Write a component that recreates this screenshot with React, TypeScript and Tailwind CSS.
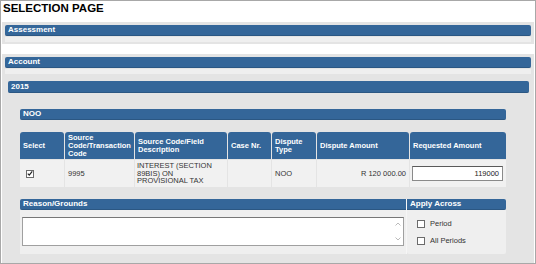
import React from 'react';

const font = { fontFamily: '"Liberation Sans", Arial, sans-serif' };

function Bar({ label, className = '' }: { label: string; className?: string }) {
  return (
    <div
      className={`h-[11px] flex items-center pl-[3px] rounded-[2px] bg-[#346699] border-b border-[#2b5783] text-white font-bold text-[8px] leading-none ${className}`}
    >
      {label}
    </div>
  );
}

const headers = [
  ['Select'],
  ['Source', 'Code/Transaction', 'Code'],
  ['Source Code/Field', 'Description'],
  ['Case Nr.'],
  ['Dispute', 'Type'],
  ['Dispute Amount'],
  ['Requested Amount'],
];

function Check({ checked }: { checked?: boolean }) {
  return (
    <span className="w-[8px] h-[8px] border border-[#6b6b6b] bg-white flex items-center justify-center shrink-0">
      {checked && (
        <svg width="7" height="7" viewBox="0 0 8 8">
          <path d="M1 4.2l2 2 4-5" fill="none" stroke="#222" strokeWidth="1.6" />
        </svg>
      )}
    </span>
  );
}

export default function App() {
  return (
    <div style={font} className="w-[536px] h-[264px] bg-white border border-[#a8a8a8] overflow-hidden flex flex-col">
      {/* Title */}
      <div className="h-[21px] pl-[2px] pt-[1px] text-[11.5px] font-bold text-black leading-[12px]">
        SELECTION PAGE
      </div>

      {/* Assessment */}
      <div className="mx-[1px] bg-[#e4e4e4] px-[3px] pt-[3px] pb-[2px]">
        <Bar label="Assessment" />
        <div className="h-[5px] mt-[1px] bg-[#efefef]" />
      </div>

      <div className="h-[10px]" />

      {/* Account */}
      <div className="mx-[1px] flex-1 bg-[#e4e4e4] px-[3px] pt-[3px]">
        <Bar label="Account" />
        <div className="h-[5px] mt-[1px] bg-[#efefef]" />

        {/* 2015 */}
        <div className="mt-[1px] pl-[3px] pr-[2px] pt-[6px]">
          <Bar label="2015" className="h-[12px] pl-[3px]" />

          <div className="pl-[12px] pr-[23px] pt-[16px]">
            <Bar label="NOO" className="pl-[2px]" />

            {/* Table */}
            <div className="mt-[12px] grid grid-cols-[44px_69px_92px_43px_44px_92px_96px] gap-x-[1px] gap-y-[1px] text-[7.5px] leading-[8px]">
              {headers.map((lines, i) => (
                <div
                  key={i}
                  className="h-[27px] bg-[#346699] rounded-t-[3px] text-white font-bold flex flex-col justify-center pl-[3px]"
                >
                  {lines.map((l) => (
                    <span key={l}>{l}</span>
                  ))}
                </div>
              ))}

              <div className="h-[27px] bg-[#f1f1f1] flex items-center pl-[6px]">
                <Check checked />
              </div>
              <div className="bg-[#f1f1f1] flex items-center pl-[3px] text-[#333]">9995</div>
              <div className="bg-[#f1f1f1] flex flex-col justify-center pl-[2px] text-[#333] leading-[7.5px]">
                <span>INTEREST (SECTION</span>
                <span>89BIS) ON</span>
                <span>PROVISIONAL TAX</span>
              </div>
              <div className="bg-[#f1f1f1]" />
              <div className="bg-[#f1f1f1] flex items-center pl-[3px] text-[#333]">NOO</div>
              <div className="bg-[#f1f1f1] flex items-center justify-end pr-[3px] text-[#333]">R 120 000.00</div>
              <div className="bg-[#f1f1f1] flex items-center pl-[2px] pr-[3px]">
                <div className="w-full h-[15px] bg-white border border-[#8a8a8a] border-t-[#5a5a5a] flex items-center justify-end pr-[3px] text-[#222]">
                  119000
                </div>
              </div>
            </div>

            {/* Reason / Apply */}
            <div className="mt-[12px] flex">
              <div className="w-[386px] flex flex-col">
                <Bar label="Reason/Grounds" className="rounded-r-none pl-[1px]" />
                <div className="h-[44px] bg-[#efefef] px-[2px] pt-[7px]">
                  <div className="h-[29px] bg-white border border-[#a0a0a0] border-t-[#777] flex justify-end pr-[2px]">
                    <div className="flex flex-col items-center justify-between py-[4px] w-[7px]">
                      <svg width="6" height="4" viewBox="0 0 6 4">
                        <path d="M0.5 3.5L3 1l2.5 2.5" fill="none" stroke="#bbb" strokeWidth="1" />
                      </svg>
                      <svg width="6" height="4" viewBox="0 0 6 4">
                        <path d="M0.5 0.5L3 3l2.5-2.5" fill="none" stroke="#bbb" strokeWidth="1" />
                      </svg>
                    </div>
                  </div>
                </div>
              </div>
              <div className="w-[100px] flex flex-col border-l border-[#f6f6f6]">
                <Bar label="Apply Across" className="rounded-l-none pl-[2px]" />
                <div className="h-[44px] bg-[#efefef] rounded-b-[2px] pl-[10px] pt-[10px] flex flex-col gap-[9px] text-[7.5px] leading-[8px] text-[#333]">
                  <div className="flex items-center gap-[5px]">
                    <Check />
                    <span>Period</span>
                  </div>
                  <div className="flex items-center gap-[5px]">
                    <Check />
                    <span>All Periods</span>
                  </div>
                </div>
              </div>
            </div>
          </div>
        </div>
      </div>
    </div>
  );
}
